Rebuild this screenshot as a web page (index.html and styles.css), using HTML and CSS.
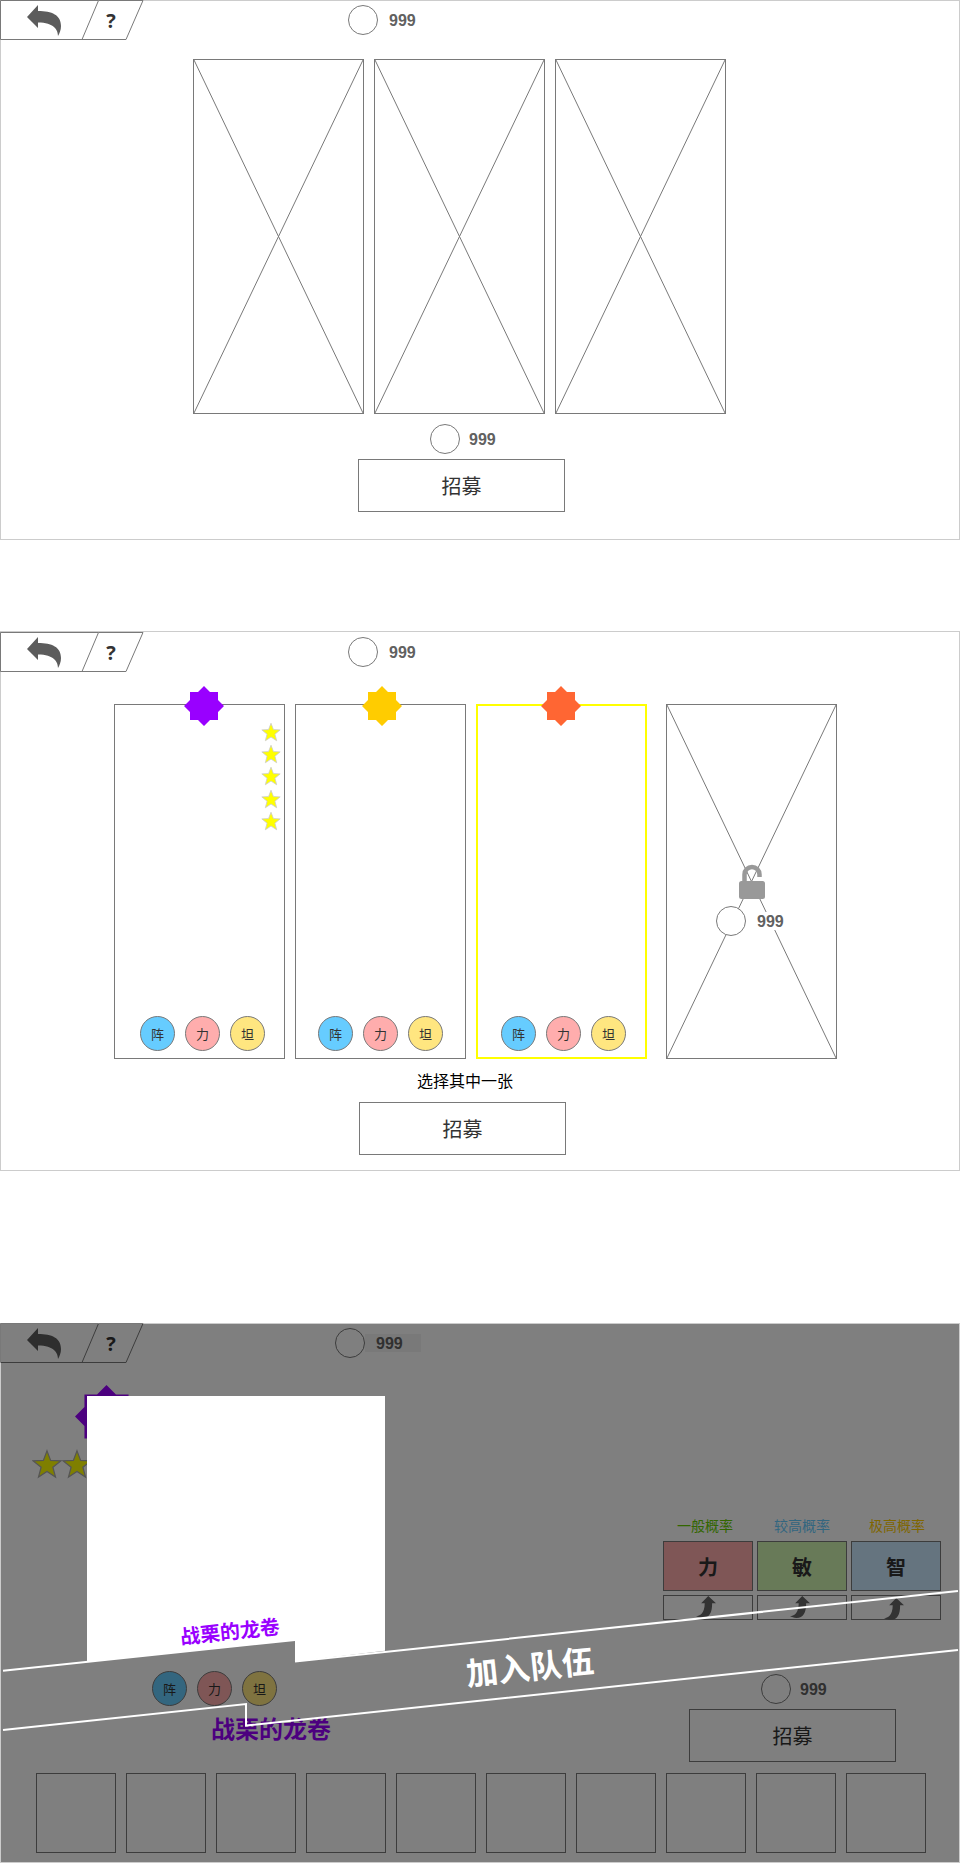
FILE: index.html
```html
<!DOCTYPE html>
<html lang="zh">
<head>
<meta charset="utf-8">
<title>招募</title>
<link rel="stylesheet" href="styles.css">
</head>
<body>
<svg class="defs" aria-hidden="true">
  <symbol id="tabs" viewBox="0 0 144 40">
    <path class="tab-line" d="M.5 .5H98.5L82 39.5H.5Z"/>
    <path class="tab-line" d="M98.5 .5H143L126 39.5H82"/>
  </symbol>
  <symbol id="back" viewBox="27 5 34 31">
    <path d="M27 17 38 5V11C52 11 61 15 61 26 61 30 59.5 33.500 58 36 58 30 54 22.500 38 22.500V28Z"/>
  </symbol>
  <symbol id="up" viewBox="0 0 31 34">
    <path transform="translate(36 -27) rotate(90)" d="M27 17 38 5V11C52 11 61 15 61 26 61 30 59.5 33.500 58 36 58 30 54 22.500 38 22.500V28Z"/>
  </symbol>
  <symbol id="badge" viewBox="-20 -20 40 40">
    <path d="M0-20 6-14H14V-6L20 0 14 6V14H6L0 20-6 14H-14V6L-20 0-14-6V-14H-6Z"/>
  </symbol>
  <symbol id="star" viewBox="0 0 24 24">
    <path d="M12 1.500 14.900 9.100 23 9.500 16.700 14.600 18.800 22.500 12 18 5.200 22.500 7.300 14.600 1 9.500 9.100 9.100Z"/>
  </symbol>
  <symbol id="cross" viewBox="0 0 169 353" preserveAspectRatio="none">
    <path class="cross-line" d="M0 0 169 353M169 0 0 353"/>
  </symbol>
</svg>

<section class="screen screen--first">
  <header class="topbar">
    <div class="tabs">
      <svg class="tabs-bg"><use href="#tabs"/></svg>
      <svg class="back-icon"><use href="#back"/></svg>
      <span class="help">?</span>
    </div>
    <div class="coin coin--top"><i class="coin-dot"></i><span class="amt">999</span></div>
  </header>
  <div class="cards cards--first">
    <div class="card"><svg class="cross"><use href="#cross"/></svg></div>
    <div class="card"><svg class="cross"><use href="#cross"/></svg></div>
    <div class="card"><svg class="cross"><use href="#cross"/></svg></div>
  </div>
  <div class="coin coin--cost"><i class="coin-dot"></i><span class="amt amt--near">999</span></div>
  <button class="recruit recruit--first">招募</button>
</section>

<section class="screen screen--second">
  <header class="topbar">
    <div class="tabs">
      <svg class="tabs-bg"><use href="#tabs"/></svg>
      <svg class="back-icon"><use href="#back"/></svg>
      <span class="help">?</span>
    </div>
    <div class="coin coin--top"><i class="coin-dot"></i><span class="amt">999</span></div>
  </header>
  <div class="cards cards--second">
    <div class="card card--a">
      <svg class="badge badge--a"><use href="#badge"/></svg>
      <div class="stars">
        <svg class="star"><use href="#star"/></svg>
        <svg class="star"><use href="#star"/></svg>
        <svg class="star"><use href="#star"/></svg>
        <svg class="star"><use href="#star"/></svg>
        <svg class="star"><use href="#star"/></svg>
      </div>
      <div class="chips"><span class="chip chip--blue">阵</span><span class="chip chip--pink">力</span><span class="chip chip--gold">坦</span></div>
    </div>
    <div class="card card--b">
      <svg class="badge badge--b"><use href="#badge"/></svg>
      <div class="chips"><span class="chip chip--blue">阵</span><span class="chip chip--pink">力</span><span class="chip chip--gold">坦</span></div>
    </div>
    <div class="card card--c">
      <svg class="badge badge--c"><use href="#badge"/></svg>
      <div class="chips"><span class="chip chip--blue">阵</span><span class="chip chip--pink">力</span><span class="chip chip--gold">坦</span></div>
    </div>
    <div class="card card--locked">
      <svg class="cross"><use href="#cross"/></svg>
      <svg class="lock" viewBox="0 0 26 34"><path class="lock-hoop" d="M5.500 18V9.500A7.500 7.500 0 0 1 20.500 9.500V12"/><rect class="lock-body" y="16" width="26" height="18" rx="2.500"/></svg>
      <div class="coin coin--locked"><i class="coin-dot"></i><span class="amt amt--plate">999</span></div>
    </div>
  </div>
  <p class="pick">选择其中一张</p>
  <button class="recruit recruit--second">招募</button>
</section>

<section class="screen screen--third">
  <header class="topbar">
    <div class="tabs">
      <svg class="tabs-bg"><use href="#tabs"/></svg>
      <svg class="back-icon"><use href="#back"/></svg>
      <span class="help">?</span>
    </div>
    <div class="coin coin--result"><i class="coin-dot"></i><span class="amt amt--shaded">999</span></div>
  </header>
  <div class="stage">
    <svg class="badge badge--hero"><use href="#badge"/></svg>
    <div class="hero-stars">
      <svg class="star star--big"><use href="#star"/></svg>
      <svg class="star star--big"><use href="#star"/></svg>
    </div>
    <div class="chips chips--hero"><span class="chip chip--blue">阵</span><span class="chip chip--pink">力</span><span class="chip chip--gold">坦</span></div>
    <div class="hero-name">战栗的龙卷</div>
    <div class="side">
      <div class="rates">
        <span class="rate rate--green">一般概率</span>
        <span class="rate rate--blue">较高概率</span>
        <span class="rate rate--amber">极高概率</span>
        <div class="stat stat--pink">力</div>
        <div class="stat stat--green">敏</div>
        <div class="stat stat--blue">智</div>
        <div class="boost"><svg class="up"><use href="#up"/></svg></div>
        <div class="boost"><svg class="up"><use href="#up"/></svg></div>
        <div class="boost boost--low"><svg class="up"><use href="#up"/></svg></div>
      </div>
      <div class="coin coin--side"><i class="coin-dot"></i><span class="amt amt--near">999</span></div>
      <button class="recruit recruit--side">招募</button>
    </div>
  </div>
  <div class="slots">
    <i class="slot"></i><i class="slot"></i><i class="slot"></i><i class="slot"></i><i class="slot"></i>
    <i class="slot"></i><i class="slot"></i><i class="slot"></i><i class="slot"></i><i class="slot"></i>
  </div>
  <div class="scrim"></div>
  <div class="sheet"></div>
  <svg class="ribbon" viewBox="0 0 960 540">
    <path class="ribbon-line" d="M3 347.700 295 317M295 338.500 958 268"/>
    <path class="ribbon-line" d="M3 407 246 381V402.600L958 327"/>
  </svg>
  <div class="sheet-name">战栗的龙卷</div>
  <div class="join">加入队伍</div>
</section>
</body>
</html>
```
FILE: styles.css
```css
* { box-sizing: border-box; }
html, body { margin: 0; padding: 0; background: #fff; }
body {
  width: 960px;
  height: 1863px;
  font-family: "Liberation Sans", "Noto Sans CJK SC", sans-serif;
  color: #333;
  overflow: hidden;
}
.defs { position: absolute; width: 0; height: 0; }

.screen {
  position: relative;
  width: 960px;
  height: 540px;
  box-shadow: inset 0 0 0 1px #ccc;
}
.screen--second { margin-top: 91px; }
.screen--third { margin-top: 152px; }

.topbar { display: flex; height: 40px; }
.screen--second .topbar { padding-top: 1px; }
.tabs { position: relative; width: 144px; height: 40px; flex: none; }
.tabs-bg { display: block; width: 144px; height: 40px; }
.tab-line { fill: none; stroke: #797979; stroke-width: 1; }
.back-icon { position: absolute; left: 27px; top: 5px; width: 34px; height: 31px; fill: #5c5c5c; }
.help {
  position: absolute;
  left: 99px;
  top: 9px;
  width: 24px;
  text-align: center;
  font-family: "Open Sans", sans-serif;
  font-size: 20px;
  line-height: 24px;
  font-weight: 700;
}

.coin { display: flex; align-items: center; height: 30px; }
.coin-dot {
  display: block;
  flex: none;
  width: 30px;
  height: 30px;
  border: 1px solid #797979;
  border-radius: 50%;
  background: #fff;
}
.amt {
  display: block;
  width: 56px;
  height: 18px;
  padding-left: 11px;
  font-size: 16px;
  line-height: 20px;
  font-weight: 700;
  color: #616161;
}
.amt--near { padding-left: 9px; }
.amt--plate { background: #fff; }
.amt--shaded { background: #f2f2f2; }
.coin--top { margin: 5px 0 0 204px; }
.coin--result { margin: 5px 0 0 191px; }
.coin--cost { margin: 10px 0 0 430px; }
.coin--locked { position: absolute; left: 49px; top: 201px; }
.lock { position: absolute; left: 72px; top: 160px; width: 26px; height: 34px; overflow: visible; }
.lock-hoop { fill: none; stroke: #999; stroke-width: 4.500; }
.lock-body { fill: #999; }

.cards { display: flex; height: 355px; gap: 10px; }
.cards--first { margin: 19px 0 0 193px; }
.cards--second { margin: 33px 0 0 114px; }
.card {
  position: relative;
  width: 171px;
  height: 355px;
  border: 1px solid #797979;
  background: #fff;
}
.card--c { border: 2px solid #ff0; }
.card--locked { margin-left: 9px; }
.cross { position: absolute; left: 0; top: 0; width: 100%; height: 100%; display: block; }
.cross-line { fill: none; stroke: #797979; stroke-width: 1; vector-effect: non-scaling-stroke; }

.badge { position: absolute; width: 40px; height: 40px; top: -19px; }
.badge--a { left: 69px; fill: #90f; }
.badge--b { left: 66px; fill: #fc0; }
.badge--c { left: 63px; top: -20px; fill: #f63; }
.badge--hero { left: 75px; top: 22px; width: 63px; height: 63px; fill: #90f; }

.stars {
  position: absolute;
  left: 146px;
  top: 17px;
  display: flex;
  flex-direction: column;
  gap: 2.200px;
}
.star { display: block; width: 20px; height: 20px; fill: #ff0; stroke: #ccc; stroke-width: 1; }
.star--big { width: 30px; height: 30px; stroke: #aaa; }
.hero-stars { position: absolute; left: 32px; top: 86px; display: flex; }

.chips { position: absolute; bottom: 7px; display: flex; gap: 10px; }
.card--a .chips { left: 25px; }
.card--b .chips { left: 22px; }
.card--c .chips { left: 23px; bottom: 6px; }
.chip {
  display: flex;
  align-items: center;
  justify-content: center;
  width: 35px;
  height: 35px;
  border: 1px solid #797979;
  border-radius: 50%;
  font-size: 13px;
  color: #333;
}
.chip--blue { background: #6cf; }
.chip--pink { background: #ffadad; }
.chip--gold { background: #ffe680; }
.chips--hero { left: 152px; top: 308px; bottom: auto; }

.pick {
  margin: 12px 0 0;
  padding-left: 417px;
  font-size: 16px;
  line-height: 22px;
  color: #000;
}
.recruit {
  display: block;
  width: 207px;
  height: 53px;
  padding: 0;
  border: 1px solid #797979;
  border-radius: 0;
  background: #fff;
  font: 20px "Liberation Sans", "Noto Sans CJK SC", sans-serif;
  color: #333;
}
.recruit--first { margin: 5px 0 0 358px; }
.recruit--second { margin: 9px 0 0 359px; }
.recruit--side { margin: 5px 0 0 26px; }

.stage { position: relative; height: 410px; }
.hero-name {
  position: absolute;
  left: 211px;
  top: 350px;
  font-size: 24px;
  line-height: 34px;
  font-weight: 700;
  color: #90f;
  white-space: nowrap;
}
.side { margin-left: 663px; width: 278px; padding-top: 153px; }
.rates {
  display: grid;
  grid-template-columns: repeat(3, 90px);
  column-gap: 4px;
  grid-template-rows: 21px 50px 25px;
  row-gap: 4px;
}
.rate { font-size: 14px; line-height: 20px; text-align: center; }
.rate--green { color: #6c0; margin-left: -6px; }
.rate--blue { color: #6cf; }
.rate--amber { color: #fc0; margin-left: 2px; }
.stat {
  display: flex;
  align-items: center;
  justify-content: center;
  border: 1px solid #797979;
  font-size: 20px;
  font-weight: 700;
  color: #333;
}
.stat--pink { background: #ffadad; }
.stat--green { background: #d0f4b0; }
.stat--blue { background: #cae8fe; }
.boost { display: flex; justify-content: center; padding: 0 4px 0 0; border: 1px solid #797979; }
.boost--low { padding-top: 2px; }
.up { display: block; width: 20px; height: 22px; fill: #666; }
.coin--side { margin: 54px 0 0 98px; }

.slots { display: flex; gap: 10px; margin-left: 36px; }
.slot { display: block; width: 80px; height: 80px; border: 1px solid #797979; }

.scrim { position: absolute; inset: 1px; background: rgba(0, 0, 0, .5); }
.sheet {
  position: absolute;
  left: 87px;
  top: 73px;
  width: 298px;
  height: 266px;
  background: #fff;
  clip-path: polygon(0 0, 298px 0, 298px 254.700px, 208px 265.500px, 208px 244px, 0 266px);
}
.ribbon { position: absolute; left: 0; top: 0; width: 960px; height: 540px; }
.ribbon-line { fill: none; stroke: #fff; stroke-width: 2; }
.sheet-name, .join {
  position: absolute;
  font-weight: 700;
  white-space: nowrap;
  transform: rotate(-6deg);
}
.sheet-name { left: 180px; top: 295px; font-size: 20px; line-height: 28px; color: #90f; }
.join { left: 466px; top: 322px; font-size: 32px; line-height: 46px; color: #fff; }
```
